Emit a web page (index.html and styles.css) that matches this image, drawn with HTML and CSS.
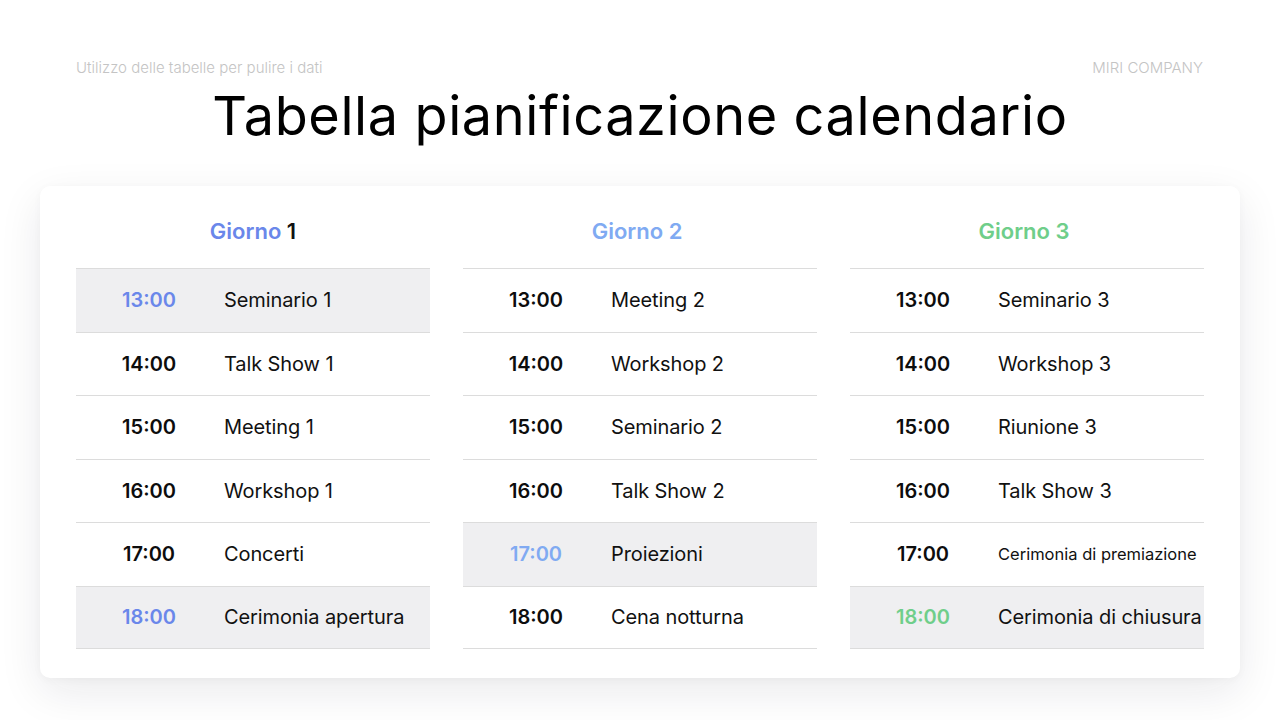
FILE: index.html
```html
<!DOCTYPE html>
<html lang="it">
<head>
<meta charset="utf-8">
<title>Tabella pianificazione calendario</title>
<link rel="stylesheet" href="styles.css">
</head>
<body>
<div class="page">
  <header class="top">
    <div class="meta">
      <span class="sub">Utilizzo delle tabelle per pulire i dati</span>
      <span class="brand">MIRI COMPANY</span>
    </div>
    <h1 class="title">Tabella pianificazione calendario</h1>
  </header>
  <section class="card">
    <div class="col day1">
      <h2 class="day"><span class="dname">Giorno</span> 1</h2>
      <div class="row hl"><span class="time">13:00</span><span class="ev">Seminario 1</span></div>
      <div class="row"><span class="time">14:00</span><span class="ev">Talk Show 1</span></div>
      <div class="row"><span class="time">15:00</span><span class="ev">Meeting 1</span></div>
      <div class="row"><span class="time">16:00</span><span class="ev">Workshop 1</span></div>
      <div class="row"><span class="time">17:00</span><span class="ev">Concerti</span></div>
      <div class="row hl"><span class="time">18:00</span><span class="ev">Cerimonia apertura</span></div>
    </div>
    <div class="col day2">
      <h2 class="day"><span class="dname">Giorno 2</span></h2>
      <div class="row"><span class="time">13:00</span><span class="ev">Meeting 2</span></div>
      <div class="row"><span class="time">14:00</span><span class="ev">Workshop 2</span></div>
      <div class="row"><span class="time">15:00</span><span class="ev">Seminario 2</span></div>
      <div class="row"><span class="time">16:00</span><span class="ev">Talk Show 2</span></div>
      <div class="row hl"><span class="time">17:00</span><span class="ev">Proiezioni</span></div>
      <div class="row"><span class="time">18:00</span><span class="ev">Cena notturna</span></div>
    </div>
    <div class="col day3">
      <h2 class="day"><span class="dname">Giorno 3</span></h2>
      <div class="row"><span class="time">13:00</span><span class="ev">Seminario 3</span></div>
      <div class="row"><span class="time">14:00</span><span class="ev">Workshop 3</span></div>
      <div class="row"><span class="time">15:00</span><span class="ev">Riunione 3</span></div>
      <div class="row"><span class="time">16:00</span><span class="ev">Talk Show 3</span></div>
      <div class="row"><span class="time">17:00</span><span class="ev small">Cerimonia di premiazione</span></div>
      <div class="row hl"><span class="time">18:00</span><span class="ev">Cerimonia di chiusura</span></div>
    </div>
  </section>
</div>
</body>
</html>
```
FILE: styles.css
```css
* { box-sizing: border-box; }
html, body { margin: 0; padding: 0; background: #ffffff; }
body {
  font-family: "Inter", "Liberation Sans", sans-serif;
  color: #111111;
  width: 1280px;
  height: 720px;
  overflow: hidden;
}
.page {
  padding: 58px 40px 0 40px;
}
.top {
  padding: 0 36px;
}
.meta {
  display: flex;
  justify-content: space-between;
  font-size: 15px;
  font-weight: 300;
  color: #c4c4c4;
  line-height: 20px;
}
.brand { margin-right: 1px; }
.title {
  margin: 6px 0 0 0;
  text-align: center;
  font-family: "Inter", "Liberation Sans", sans-serif;
  font-weight: 400;
  font-size: 54px;
  line-height: 64px;
  letter-spacing: 0.6px;
  color: #000000;
}
.card {
  margin-top: 38px;
  height: 492px;
  background: #ffffff;
  border-radius: 10px;
  box-shadow: 0 14px 44px rgba(20, 20, 40, 0.09), 0 2px 8px rgba(20, 20, 40, 0.03);
  padding: 30px 36px 0 36px;
  display: grid;
  grid-template-columns: repeat(3, 354px);
  column-gap: 33px;
}
.day {
  margin: 0 0 22px 0;
  text-align: center;
  font-size: 22px;
  line-height: 30px;
  font-weight: 600;
  color: #111111;
}
.day2 .day, .day3 .day { padding-right: 6px; }
.day1 .dname { color: #6a87ea; }
.day2 .dname { color: #80aaf2; }
.day3 .dname { color: #6fce8a; }
.row {
  display: flex;
  align-items: center;
  height: 63.5px;
  border-top: 1.5px solid #dcdcdc;
  font-size: 20px;
}
.row:last-child { border-bottom: 1.5px solid #dcdcdc; }
.row.hl { background: #efeff1; }
.time {
  width: 146px;
  text-align: center;
  font-weight: 600;
  color: #0d0d0d;
}
.day1 .hl .time { color: #6a87ea; }
.day2 .hl .time { color: #80aaf2; }
.day3 .hl .time { color: #6fce8a; }
.ev {
  padding-left: 2px;
  font-weight: 400;
  color: #111111;
  white-space: nowrap;
  letter-spacing: -0.1px;
}
.ev.small { font-size: 16.5px; letter-spacing: 0; }
```
